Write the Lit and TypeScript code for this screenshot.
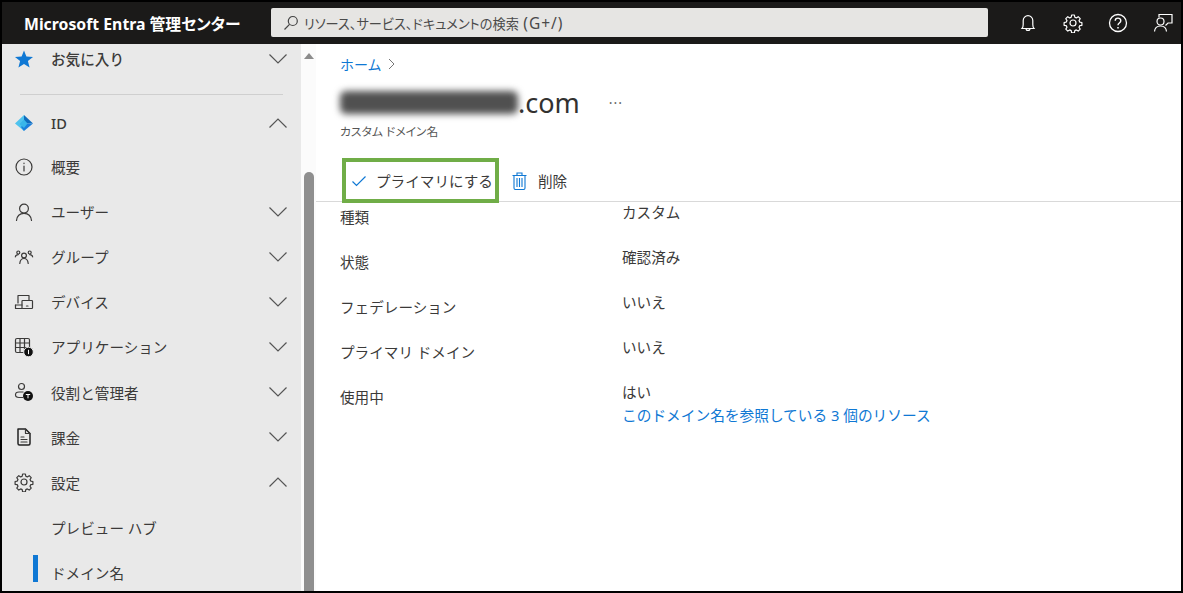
import { LitElement, html, css, svg } from "lit";
import { customElement } from "lit/decorators.js";

const chevDown = html`<svg class="chev" viewBox="0 0 20 12" width="20" height="12"><path d="M1.500 1.500 L10 10 L18.500 1.500" fill="none" stroke="#555" stroke-width="1.200"/></svg>`;
const chevUp = html`<svg class="chev" viewBox="0 0 20 12" width="20" height="12"><path d="M1.500 10.500 L10 2 L18.500 10.500" fill="none" stroke="#555" stroke-width="1.200"/></svg>`;

const ic = (body: unknown) => html`<svg class="icon" viewBox="0 0 20 20" width="20" height="20" fill="none" stroke="#3b3a39" stroke-width="1.200" stroke-linecap="round" stroke-linejoin="round">${body}</svg>`;

const gearPath = "M8.600 2 h2.800 l.4 2.200 1.500.7 1.900-1.200 2 2 -1.200 1.900 .7 1.500 2.200.4 v2.800 l-2.200.4 -.7 1.500 1.200 1.900 -2 2 -1.900-1.200 -1.500.7 -.4 2.200 h-2.800 l-.4-2.200 -1.500-.7 -1.900 1.200 -2-2 1.200-1.900 -.7-1.500 -2.200-.4 v-2.800 l2.200-.4 .7-1.500 -1.200-1.900 2-2 1.900 1.200 1.500-.7z";

const icons = {
  star: html`<svg class="icon" viewBox="0 0 20 20" width="20" height="20"><path d="M10 1.500 L12.400 7.600 L19 8 L13.900 12.100 L15.600 18.500 L10 15 L4.400 18.500 L6.100 12.100 L1 8 L7.600 7.600Z" fill="#0f78d4"/></svg>`,
  id: html`<svg class="icon" viewBox="0 0 20 20" width="20" height="20"><path d="M10 2 L1 10.500 L10 18Z" fill="#4fc3ee"/><path d="M10 2 L19 10.500 L10 10.500Z" fill="#0f6cbd"/><path d="M19 10.500 L10 18 L7 14 L10 10.500Z" fill="#1b7fdc"/><path d="M10 6.500 L5.500 11 L10 15 L13.500 10.500Z" fill="#38b6ea"/></svg>`,
  info: ic(svg`<circle cx="10" cy="10" r="8"/><path d="M10 9 v5 M10 6.200 v.4"/>`),
  user: ic(svg`<circle cx="10" cy="6.600" r="4.400"/><path d="M2.500 18.500 c.5-4.800 3.500-7.200 7.500-7.200 s7 2.400 7.500 7.200"/>`),
  group: ic(svg`<circle cx="10" cy="8.500" r="2.400"/><path d="M5.800 16.500 c.3-3.200 1.900-5 4.200-5 s3.900 1.800 4.200 5"/><circle cx="4.300" cy="5.500" r="1.500"/><circle cx="15.700" cy="5.500" r="1.500"/><path d="M1.300 10 c.3-1.500 1.500-2.400 3-2.400 M18.700 10 c-.3-1.500-1.500-2.400-3-2.400"/>`),
  device: ic(svg`<path d="M4 11 V3.500 h11 v4.500"/><path d="M1.500 13 h6.500"/><path d="M1.500 13 v3.500 h6.500"/><rect x="8" y="8.500" width="10.500" height="8" rx=".8"/><path d="M12.500 14 h1.500"/>`),
  app: html`<svg class="icon" viewBox="0 0 20 20" width="20" height="20" fill="none" stroke="#3b3a39" stroke-width="1.200"><rect x="1.500" y="1.500" width="14" height="14" rx="1.500"/><path d="M1.500 6 h14 M1.500 10.500 h14 M6 1.500 v14 M10.500 1.500 v14"/><circle cx="14.500" cy="15" r="4.800" fill="#111" stroke="#e9e9e9" stroke-width="1"/><path d="M14.500 12.800 v4.400" stroke="#fff" stroke-width="1"/></svg>`,
  role: html`<svg class="icon" viewBox="0 0 20 20" width="20" height="20" fill="none" stroke="#3b3a39" stroke-width="1.200"><circle cx="7.500" cy="4.500" r="3"/><path d="M9.500 10 H5 C2.800 10 1.500 11.300 1.500 12.800 C1.500 14.300 2.800 15.500 5 15.500 H9"/><circle cx="14" cy="14" r="5" fill="#111" stroke="none"/><path d="M11.800 12.500 h4.400 M14 12.500 v3.800" stroke="#fff" stroke-width="1"/></svg>`,
  bill: ic(svg`<path d="M4 2 h7.500 L16 6.500 V16.500 a1.500 1.500 0 0 1-1.500 1.500 H5.500 A1.500 1.500 0 0 1 4 16.500Z" stroke-width="1.500" stroke="#222"/><path d="M11.500 2 V6.500 H16"/><path d="M7 10 h3 M7 12.500 h6 M7 15 h6"/>`),
  gear: ic(svg`<path d=${gearPath}/><circle cx="10" cy="10" r="3"/>`),
};

const navItems = [
  { label: "お気に入り", icon: icons.star, chev: chevDown, strong: true },
  { divider: true },
  { label: "ID", icon: icons.id, chev: chevUp, strong: true },
  { label: "概要", icon: icons.info },
  { label: "ユーザー", icon: icons.user, chev: chevDown },
  { label: "グループ", icon: icons.group, chev: chevDown },
  { label: "デバイス", icon: icons.device, chev: chevDown },
  { label: "アプリケーション", icon: icons.app, chev: chevDown },
  { label: "役割と管理者", icon: icons.role, chev: chevDown },
  { label: "課金", icon: icons.bill, chev: chevDown },
  { label: "設定", icon: icons.gear, chev: chevUp },
  { label: "プレビュー ハブ" },
  { label: "ドメイン名", active: true },
];

const details = [
  ["種類", "カスタム"],
  ["状態", "確認済み"],
  ["フェデレーション", "いいえ"],
  ["プライマリ ドメイン", "いいえ"],
  ["使用中", "はい"],
];

@customElement("app-root")
export class AppRoot extends LitElement {
  static styles = css`
    :host {
      display: block;
      width: 1183px;
      height: 593px;
      box-sizing: border-box;
      border: 2px solid #000;
      overflow: hidden;
      background: #fff;
      font-family: "Noto Sans", "Noto Sans CJK JP", sans-serif;
      font-size: 14.6px;
      color: #3b3a39;
    }
    .top {
      height: 42px;
      background: #1b1a19;
      display: flex;
      align-items: center;
      color: #fff;
    }
    .brand {
      width: 269px;
      box-sizing: border-box;
      padding-left: 22px;
      font-weight: 700;
      font-size: 15.800px;
      font-feature-settings: "palt";
      white-space: nowrap;
    }
    .search {
      width: 717px;
      height: 29px;
      margin-top: -1px;
      background: #e6e5e3;
      border-radius: 2px;
      display: flex;
      align-items: center;
      gap: 5px;
      padding-left: 12px;
      box-sizing: border-box;
      color: #4a4a4a;
      font-size: 13.200px;
      font-feature-settings: "palt";
      white-space: nowrap;
    }
    .hint {
      font-size: 15.500px;
      letter-spacing: 1px;
      margin-left: 1px;
    }
    .tools {
      margin-left: 30px;
      display: flex;
      align-items: center;
      gap: 25px;
    }
    .tools svg { display: block; }
    .main {
      display: flex;
      height: 547px;
    }
    .side {
      width: 299px;
      background: #e9e9e9;
      flex: none;
      overflow: hidden;
    }
    .row {
      height: 45.100px;
      display: flex;
      align-items: center;
      padding-left: 12px;
      padding-right: 13px;
      box-sizing: border-box;
      white-space: nowrap;
    }
    .row:first-child { height: 29px; }
    .slot {
      width: 20px;
      height: 20px;
      margin-right: 17px;
      flex: none;
    }
    .icon { display: block; }
    .lbl { flex: 1; }
    .strong { font-weight: 500; }
    .chev { flex: none; }
    .divider {
      height: 1px;
      background: #cfcfcf;
      margin: 21px 18px 0 18px;
    }
    .divider + .row { height: 49px; padding-top: 7px; }
    .active { position: relative; }
    .active::before {
      content: "";
      position: absolute;
      left: 31px;
      top: 5px;
      width: 5px;
      height: 27px;
      background: #0f78d4;
    }
    .scroll {
      width: 15px;
      flex: none;
      padding-left: 3px;
      box-sizing: border-box;
      background: #fbfbfb;
      display: flex;
      flex-direction: column;
    }
    .arrow {
      width: 0;
      height: 0;
      border-left: 5px solid transparent;
      border-right: 5px solid transparent;
      border-bottom: 6px solid #8c8c8c;
      margin-top: 9px;
    }
    .thumb {
      width: 10px;
      flex: 1;
      margin-top: 113px;
      background: #8f8f8f;
      border-radius: 5px 5px 0 0;
    }
    .content {
      flex: 1;
      padding: 10px 0 0 24px;
      min-width: 0;
    }
    .crumb {
      display: flex;
      align-items: center;
      gap: 6px;
      height: 20px;
      color: #0f78d4;
      font-size: 14px;
    }
    .title {
      display: flex;
      align-items: center;
      height: 38px;
      margin-top: 9px;
      font-size: 27px;
      color: #323130;
      white-space: nowrap;
    }
    .blur {
      filter: blur(3.500px);
      width: 178px;
      background: #505050;
      height: 23px;
      display: block;
      border-radius: 6px;
    }
    .more {
      font-size: 14px;
      margin-left: 29px;
      color: #666;
      letter-spacing: 1px;
    }
    .sub {
      font-size: 11.800px;
      height: 16px;
      line-height: 16px;
      font-feature-settings: "palt";
      color: #555;
      margin-top: 2px;
    }
    .toolbar {
      margin-top: 19px;
      height: 43px;
      margin-left: -24px;
      padding-left: 26px;
      border-bottom: 1px solid #d9d9d9;
      display: flex;
      align-items: flex-start;
      color: #3b3a39;
      white-space: nowrap;
    }
    .primary {
      width: 157px;
      height: 45px;
      box-sizing: border-box;
      border: 4px solid #70ad47;
      display: flex;
      align-items: center;
      padding-left: 5px;
      gap: 9px;
      flex: none;
      background: #fff;
    }
    .del {
      display: flex;
      align-items: center;
      height: 45px;
      gap: 11px;
      margin-left: 13px;
    }
    .grid {
      display: grid;
      grid-template-columns: 282px 1fr;
      grid-auto-rows: 45px;
    }
    .k { padding-top: 5px; line-height: 20px; }
    .v { line-height: 20px; }
    .link {
      color: #0f78d4;
      display: block;
      margin-top: 3px;
      font-size: 14.700px;
    }
  `;

  render() {
    return html`
      <div class="top">
        <div class="brand">Microsoft Entra 管理センター</div>
        <div class="search">
          <svg width="16" height="16" viewBox="0 0 16 16" fill="none" stroke="#444" stroke-width="1.200"><circle cx="9.800" cy="6" r="4.500"/><path d="M6.500 9.300 L1.500 14.500"/></svg>
          <span>リソース、サービス、ドキュメントの検索 <span class="hint">(G+/)</span></span>
        </div>
        <div class="tools">
          <svg width="20" height="20" viewBox="0 0 20 20" fill="none" stroke="#fff" stroke-width="1.200"><path d="M4 15.500 c1-1.200 1.200-2 1.200-4 V7.500 a4.800 4.800 0 0 1 9.600 0 V11.500 c0 2 .2 2.800 1.200 4Z"/><path d="M8 15.500 c0 2.600 4 2.600 4 0"/></svg>
          <svg width="20" height="20" viewBox="0 0 20 20" fill="none" stroke="#fff" stroke-width="1.200" stroke-linejoin="round"><path d=${gearPath}/><circle cx="10" cy="10" r="3"/></svg>
          <svg width="20" height="20" viewBox="0 0 20 20" fill="none" stroke="#fff" stroke-width="1.300"><circle cx="10" cy="10" r="8.500"/><path d="M7.200 7.800 c0-3.600 5.600-3.600 5.600 0 c0 2.200-2.800 2.200-2.800 4.400" stroke-width="1.400"/><path d="M10 14 v1.400" stroke-width="1.500"/></svg>
          <svg width="20" height="20" viewBox="0 0 20 20" fill="none" stroke="#fff" stroke-width="1.200"><path d="M6 4.500 V1.500 H19 V10 H15 L12.500 12.500"/><circle cx="7.500" cy="8.500" r="3.500"/><path d="M1.500 18.500 c.3-3.500 2.800-5.500 6-5.500 s5.700 2 6 5.500"/></svg>
        </div>
      </div>
      <div class="main">
        <nav class="side">
          ${navItems.map((n: any) =>
            n.divider
              ? html`<div class="divider"></div>`
              : html`<div class="row ${n.active ? "active" : ""}">
                  <span class="slot">${n.icon ?? ""}</span>
                  <span class="lbl ${n.strong ? "strong" : ""}">${n.label}</span>
                  ${n.chev ?? ""}
                </div>`
          )}
        </nav>
        <div class="scroll"><div class="arrow"></div><div class="thumb"></div></div>
        <div class="content">
          <div class="crumb">
            <span>ホーム</span>
            <svg width="7" height="12" viewBox="0 0 7 12" fill="none" stroke="#777" stroke-width="1"><path d="M1 1 L6 6 L1 11"/></svg>
          </div>
          <div class="title">
            <span class="blur"></span><span>.com</span><span class="more">···</span>
          </div>
          <div class="sub">カスタム ドメイン名</div>
          <div class="toolbar">
            <div class="primary">
              <svg width="16" height="12" viewBox="0 0 16 12" fill="none" stroke="#0f78d4" stroke-width="1.200"><path d="M1.500 6.500 L5.500 10.500 L14.500 1.500"/></svg>
              <span>プライマリにする</span>
            </div>
            <div class="del">
              <svg width="15" height="18" viewBox="0 0 15 18" fill="none" stroke="#0f78d4" stroke-width="1.100"><path d="M.5 3.500 h14 M5 3.500 V1 h5 v2.500 M2 3.500 V16 a1.500 1.500 0 0 0 1.500 1.500 h8 A1.500 1.500 0 0 0 13 16 V3.500 M5 6 v9 M7.500 6 v9 M10 6 v9"/></svg>
              <span>削除</span>
            </div>
          </div>
          <div class="grid">
            ${details.map(
              ([k, v], i) => html`
                <div class="k">${k}</div>
                <div class="v">${v}${i === 4 ? html`<span class="link">このドメイン名を参照している 3 個のリソース</span>` : ""}</div>
              `
            )}
          </div>
        </div>
      </div>
    `;
  }
}
